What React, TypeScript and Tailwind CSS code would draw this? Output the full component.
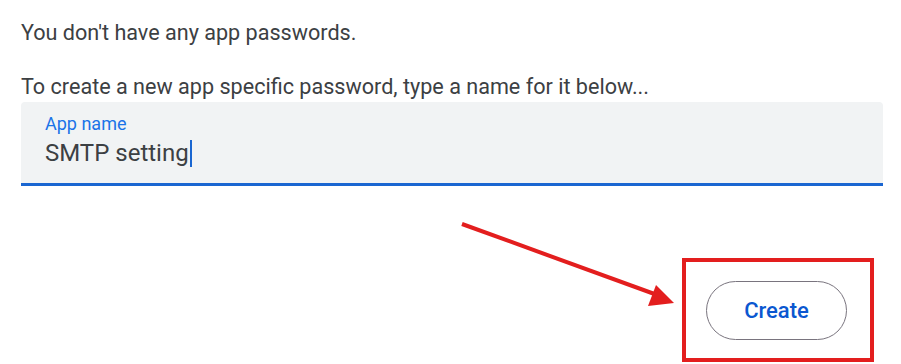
import { useState } from "react";

const AppPasswords = () => {
  const [appName] = useState("SMTP setting");

  return (
    <div className="relative w-[901px] h-[364px] bg-white overflow-hidden font-['Roboto',sans-serif] text-[#3c4043]">
      <div className="pl-[21px] pr-[18px] pt-[19px] flex flex-col">
        <p className="text-[21.6px] leading-[28px]">You don't have any app passwords.</p>
        <p className="text-[21.6px] leading-[28px] mt-[26px]">
          To create a new app specific password, type a name for it below...
        </p>
        <div className="mt-[1px] h-[84px] bg-[#f1f3f4] rounded-t-[4px] border-b-[3px] border-[#1a66d1] px-[24px] pt-[11px] flex flex-col">
          <span className="text-[18px] leading-[22px] text-[#1a73e8]">App name</span>
          <div className="mt-[3px] flex items-center text-[24px] leading-[30px] text-[#3c4043]">
            <span>{appName}</span>
            <span className="ml-[1px] w-[2px] h-[27px] bg-[#1a66d1]" />
          </div>
        </div>
      </div>

      <div className="flex justify-end pr-[27px] mt-[72px]">
        <div className="border-[4px] border-[#e31e1e] pl-[20px] pr-[23px] pt-[19px] pb-[18px]">
          <button className="w-[141px] h-[59px] rounded-full border border-[#79747e] text-[#0b57d0] text-[22px] font-medium">
            Create
          </button>
        </div>
      </div>

      <svg className="absolute left-0 top-0 pointer-events-none" width="901" height="364">
        <line x1="462" y1="224" x2="660" y2="296" stroke="#e31e1e" strokeWidth="4" />
        <polygon points="656,285 648,306 674,303" fill="#e31e1e" />
      </svg>
    </div>
  );
};

export default function App() {
  return <AppPasswords />;
}
